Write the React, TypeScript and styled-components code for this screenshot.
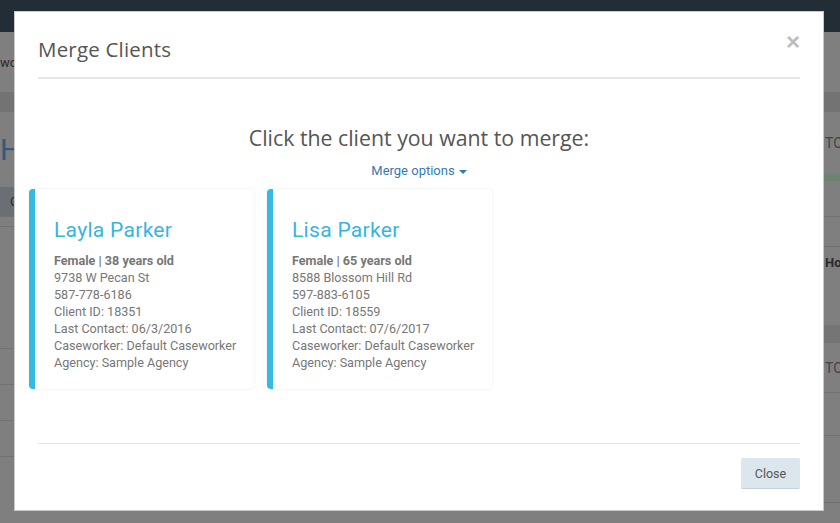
import React from "react";
import styled, { createGlobalStyle } from "styled-components";

const Global = createGlobalStyle`
  html, body { margin: 0; padding: 0; }
  body { font-family: Roboto, "Liberation Sans", sans-serif; background: #7f7f7f; overflow: hidden; }
`;

/* ---------- dimmed page behind the modal ---------- */
const Page = styled.div`
  width: 840px;
  height: 523px;
  background: #7f7f7f;
  display: flex;
  flex-direction: column;
  overflow: hidden;
`;
const TopBar = styled.div`
  height: 32px;
  background: #232d36;
  flex: none;
`;
const PageBody = styled.div`
  flex: 1;
  display: grid;
  grid-template-columns: 330px 1fr 140px;
`;
const Column = styled.div`
  display: flex;
  flex-direction: column;
`;
const BgRow = styled.div<{ $h: number; $bg?: string; $line?: boolean }>`
  height: ${(p) => p.$h}px;
  background: ${(p) => p.$bg || "transparent"};
  border-bottom: ${(p) => (p.$line ? "1px solid #727272" : "none")};
  box-sizing: border-box;
  display: flex;
  align-items: center;
  font-size: 13px;
  color: #2a2a2a;
  white-space: nowrap;
`;
const BgText = styled.span<{ $size?: number; $color?: string; $bold?: boolean; $x?: number }>`
  margin-left: ${(p) => p.$x ?? 0}px;
  font-size: ${(p) => p.$size ?? 13}px;
  color: ${(p) => p.$color || "#2a2a2a"};
  font-weight: ${(p) => (p.$bold ? 700 : 400)};
`;

/* ---------- modal ---------- */
const Overlay = styled.div`
  position: fixed;
  inset: 0;
  padding: 11px 0 0 14px;
  display: flex;
  align-items: flex-start;
`;
const Modal = styled.div`
  width: 810px;
  height: 500px;
  box-sizing: border-box;
  background: #fff;
  border: 1px solid #c9c9c9;
  display: flex;
  flex-direction: column;
`;
const Header = styled.div`
  margin: 0 23px;
  height: 67px;
  border-bottom: 2px solid #e6e6e6;
  display: flex;
  align-items: center;
  justify-content: space-between;
  padding-top: 9px;
  box-sizing: border-box;
`;
const Title = styled.h4`
  margin: 0;
  font-family: "Open Sans", sans-serif;
  font-weight: 400;
  font-size: 20.5px;
  color: #555;
  letter-spacing: 0.2px;
`;
const CloseX = styled.button`
  border: 0;
  background: none;
  padding: 0;
  margin: -14px 0 0 0;
  font-family: "Liberation Sans", sans-serif;
  font-weight: 700;
  font-size: 24px;
  line-height: 1;
  color: #bdbdbd;
  cursor: pointer;
`;
const Body = styled.div`
  padding: 46px 14px 0;
  flex: 1;
  display: flex;
  flex-direction: column;
  align-items: stretch;
`;
const Prompt = styled.h3`
  margin: 0;
  text-align: center;
  font-family: "Open Sans", sans-serif;
  font-weight: 400;
  font-size: 21.3px;
  line-height: 26px;
  color: #555;
`;
const OptionsLink = styled.a`
  align-self: center;
  margin-top: 12px;
  font-size: 13px;
  line-height: 16px;
  color: #337ab7;
  text-decoration: none;
  display: flex;
  align-items: center;
  gap: 4px;
  cursor: pointer;
`;
const Caret = styled.span`
  width: 0;
  height: 0;
  border-left: 4px solid transparent;
  border-right: 4px solid transparent;
  border-top: 4px solid #337ab7;
  margin-top: 2px;
`;
const Cards = styled.div`
  display: flex;
  gap: 13px;
  margin-top: 10px;
`;
const Card = styled.div`
  width: 225px;
  height: 200px;
  box-sizing: border-box;
  border-left: 6px solid #37bae2;
  border-radius: 4px;
  background: #fff;
  box-shadow: 0 0 3px rgba(0, 0, 0, 0.09);
  padding: 29px 8px 0 19px;
  cursor: pointer;
`;
const Name = styled.div`
  font-size: 21px;
  line-height: 24px;
  color: #37b5df;
  margin-bottom: 10px;
  letter-spacing: 0.3px;
`;
const Line = styled.div<{ $bold?: boolean }>`
  font-size: 12.6px;
  line-height: 17px;
  color: #777;
  font-weight: ${(p) => (p.$bold ? 700 : 400)};
  white-space: nowrap;
`;
const Footer = styled.div`
  margin: 0 23px;
  border-top: 1px solid #e5e5e5;
  height: 67px;
  display: flex;
  justify-content: flex-end;
  align-items: flex-start;
  padding-top: 14px;
  box-sizing: border-box;
`;
const Button = styled.button`
  width: 59px;
  height: 31px;
  border: 0;
  border-bottom: 1px solid #c3cfd8;
  border-radius: 2px;
  background: #dce6ed;
  color: #555;
  font-family: Roboto, sans-serif;
  font-size: 12.5px;
  cursor: pointer;
`;

type Client = {
  name: string;
  age: number;
  address: string;
  phone: string;
  id: number;
  contact: string;
};

const clients: Client[] = [
  { name: "Layla Parker", age: 38, address: "9738 W Pecan St", phone: "587-778-6186", id: 18351, contact: "06/3/2016" },
  { name: "Lisa Parker", age: 65, address: "8588 Blossom Hill Rd", phone: "597-883-6105", id: 18559, contact: "07/6/2017" },
];

export default function App() {
  return (
    <>
      <Global />
      <Page>
        <TopBar />
        <PageBody>
          <Column>
            <BgRow $h={60}>
              <BgText $x={0}>work</BgText>
            </BgRow>
            <BgRow $h={20} $bg="#737373" />
            <BgRow $h={75}>
              <BgText $size={30} $color="#36587a" $x={0}>H</BgText>
            </BgRow>
            <BgRow $h={30} $bg="#6b6f73" $line>
              <BgText $x={10}>C</BgText>
            </BgRow>
            <BgRow $h={10} $line />
            <BgRow $h={122} $line />
            <BgRow $h={36} $line />
            <BgRow $h={36} $line />
            <BgRow $h={36} $line />
            <BgRow $h={36}>
              <BgText $x={254} $color="#333">No</BgText>
            </BgRow>
          </Column>
          <Column />
          <Column>
            <BgRow $h={60} />
            <BgRow $h={20} $bg="#737373" />
            <BgRow $h={62}>
              <BgText $x={125} $color="#444" $size={14}>TO</BgText>
            </BgRow>
            <BgRow $h={7} $bg="#6e8272" />
            <BgRow $h={36} $line />
            <BgRow $h={30} $line />
            <BgRow $h={30}>
              <BgText $x={125} $bold>Ho</BgText>
            </BgRow>
            <BgRow $h={48} />
            <BgRow $h={18} $bg="#757575" />
            <BgRow $h={50} $line>
              <BgText $x={125} $color="#444" $size={14}>TO</BgText>
            </BgRow>
            <BgRow $h={43} $line />
            <BgRow $h={67} $line />
          </Column>
        </PageBody>
      </Page>
      <Overlay>
        <Modal>
          <Header>
            <Title>Merge Clients</Title>
            <CloseX aria-label="Close">×</CloseX>
          </Header>
          <Body>
            <Prompt>Click the client you want to merge:</Prompt>
            <OptionsLink>
              Merge options <Caret />
            </OptionsLink>
            <Cards>
              {clients.map((c) => (
                <Card key={c.id}>
                  <Name>{c.name}</Name>
                  <Line $bold>Female | {c.age} years old</Line>
                  <Line>{c.address}</Line>
                  <Line>{c.phone}</Line>
                  <Line>Client ID: {c.id}</Line>
                  <Line>Last Contact: {c.contact}</Line>
                  <Line>Caseworker: Default Caseworker</Line>
                  <Line>Agency: Sample Agency</Line>
                </Card>
              ))}
            </Cards>
          </Body>
          <Footer>
            <Button>Close</Button>
          </Footer>
        </Modal>
      </Overlay>
    </>
  );
}
